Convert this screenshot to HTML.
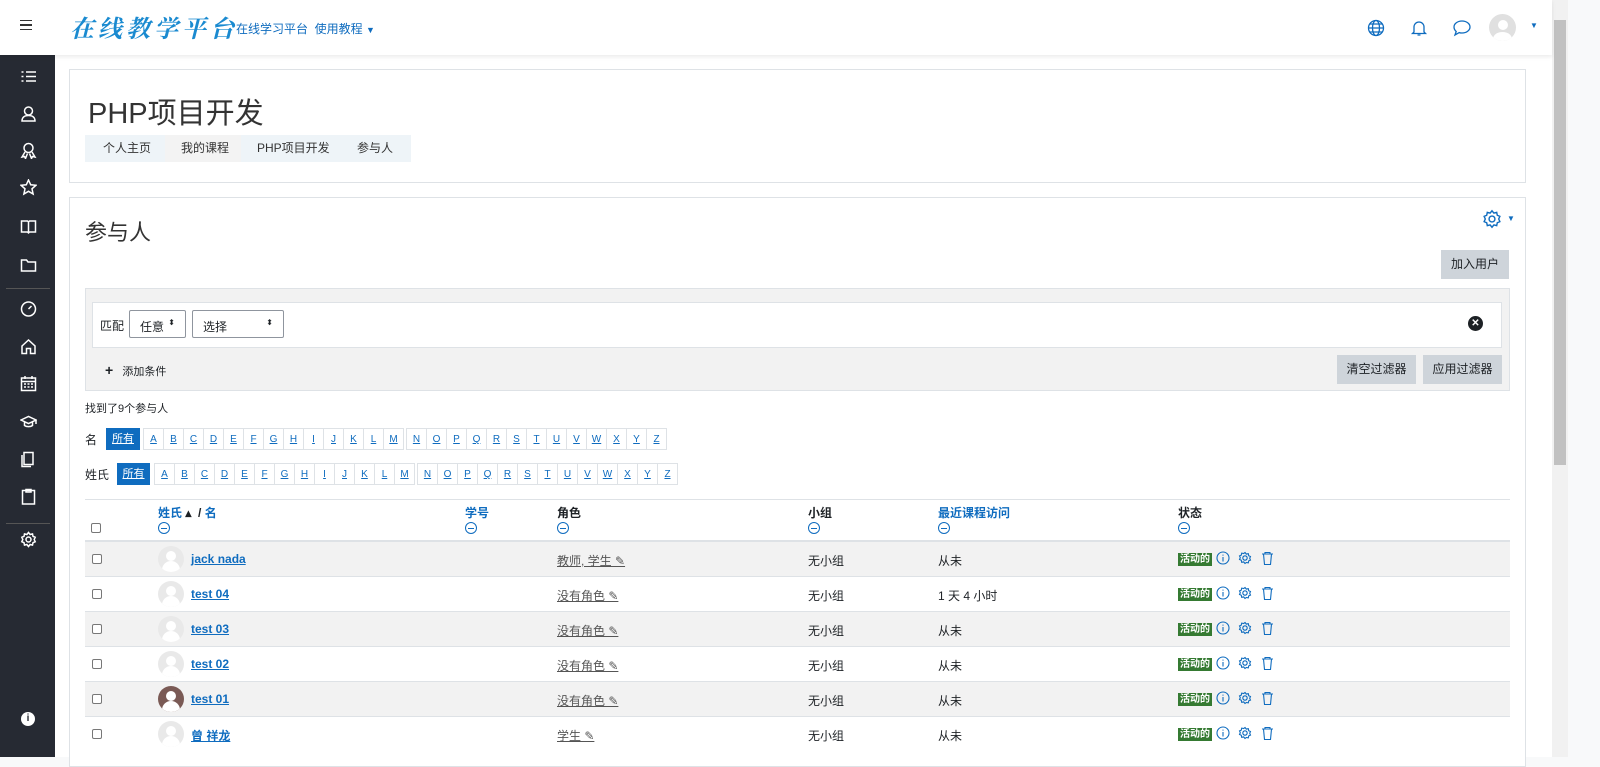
<!DOCTYPE html><html><head><meta charset="utf-8"><style>
*{box-sizing:border-box;margin:0;padding:0}
body{width:1600px;height:757px;overflow:hidden;font-family:"Liberation Sans","Noto Sans CJK SC",sans-serif;font-size:12px;color:#1d2125;background:#f8f9fa;position:relative}
.hdr{position:absolute;left:0;top:0;width:1552px;height:55px;background:#fff;box-shadow:0 2px 4px rgba(0,0,0,.08);z-index:2}
.side{position:absolute;left:0;top:55px;width:55px;height:702px;background:#262a33}
.side svg{position:absolute;left:20px;width:17px;height:17px;fill:none;stroke:#fff;stroke-width:1.5}
.main{position:absolute;left:55px;top:55px;width:1497px;height:702px;background:#fff}
.card{position:absolute;background:#fff;border:1px solid #dee2e6}
a{color:#0f6cbf}
.bc{position:absolute;top:135px;height:27px;line-height:27px;font-size:12px;background:#eef4f8;color:#333}
.btn{position:absolute;background:#ced4da;color:#1d2125;text-align:center;font-size:12px}
.letters{position:absolute;display:flex;font-size:10px}
.letters span{display:inline-block;width:21px;height:22px;line-height:22px;text-align:center;border:1px solid #dee2e6;margin-left:-1px;color:#0f6cbf;text-decoration:underline}
.letters span.gap{margin-left:2px}
.all{position:absolute;background:#0f6cbf;color:#fff;text-decoration:underline;text-align:center;line-height:22px;height:22px;font-size:11px}
.row{position:absolute;left:85px;width:1425px;height:35px;border-top:1px solid #dee2e6;font-size:12px}
.row.s{background:#f2f2f2}
.row>*{position:absolute;top:10px}
.cb{left:7px!important;top:12px!important;width:10px;height:10px;border:1px solid #777;border-radius:2px;background:#fff}
.av{left:73px!important;top:4px!important;width:26px;height:26px;border-radius:50%;background:#e9e9e9;overflow:hidden}
.av:after{content:"";position:absolute;left:8px;top:5px;width:10px;height:10px;border-radius:50%;background:#fff;box-shadow:0 14px 0 4px #fff}
.nm{left:106px;font-weight:bold;color:#0f6cbf;text-decoration:underline;font-size:12px}
.role{left:472px;color:#555;text-decoration:underline}
.badge{left:1093px!important;top:11px!important;background:#357a32;color:#fff;font-size:10px;font-weight:bold;padding:0 2px;height:13px;line-height:13px}
.ic{left:1131px;top:9px!important}
.minus{display:inline-block;width:12px;height:12px;border:1px solid #0f6cbf;border-radius:50%;position:absolute;top:522px}
.minus:after{content:"";position:absolute;left:2px;top:5px;width:6px;height:1px;background:#0f6cbf}
</style></head><body>
<svg width="0" height="0" style="position:absolute"><defs>
<g id="acts" fill="none" stroke="#0f6cbf" stroke-width="1.1"><circle cx="7" cy="7" r="6"/><path d="M7 6v4.5M7 3.6v1"/><g transform="translate(29,7)"><circle r="2.2"/><path d="M0-5.5l1.3 1.6 2-.4.4 2 1.8.8-.8 1.8.8 1.8-1.8.8-.4 2-2-.4L0 5.5l-1.3-1.6-2 .4-.4-2-1.8-.8.8-1.8-.8-1.8 1.8-.8.4-2 2 .4z"/></g><path d="M46 3h11M49 3V1.5h5V3M47.5 3l1 10.5h6l1-10.5"/></g>
</defs></svg>
<div class="hdr">
<div style="position:absolute;left:20px;top:20px;width:12px;height:10px;border-top:1.5px solid #333;border-bottom:1.5px solid #333"><div style="margin-top:3px;height:1.5px;background:#333"></div></div>
<div style="position:absolute;left:70px;top:9px;font-size:24px;color:#1a8ad0;font-style:italic;font-weight:bold;letter-spacing:4px;font-family:'Noto Serif CJK SC',serif">在线教学平台</div>
<div style="position:absolute;left:236px;top:20px;font-size:12px;color:#0f6cbf">在线学习平台 &nbsp;使用教程 <span style="font-size:9px">▼</span></div>
<svg style="position:absolute;left:1367px;top:19px" width="18" height="18" fill="none" stroke="#0f6cbf" stroke-width="1.3"><circle cx="9" cy="9" r="7.5"/><ellipse cx="9" cy="9" rx="3.5" ry="7.5"/><path d="M1.5 9h15M3 5h12M3 13h12"/></svg>
<svg style="position:absolute;left:1410px;top:19px" width="18" height="18" fill="none" stroke="#0f6cbf" stroke-width="1.3"><path d="M4 13V8a5 5 0 0 1 10 0v5l1.5 1.5h-13zM7.5 16h3"/></svg>
<svg style="position:absolute;left:1452px;top:19px" width="20" height="18" fill="none" stroke="#0f6cbf" stroke-width="1.3"><path d="M10 2c4.5 0 8 2.7 8 6s-3.5 6-8 6c-1 0-2-.1-2.8-.4L3 16l1.2-3.5C2.8 11.3 2 9.7 2 8c0-3.3 3.5-6 8-6z"/></svg>
<div style="position:absolute;left:1489px;top:14px;width:27px;height:27px;border-radius:50%;background:#e0e0e0;overflow:hidden"><div style="position:absolute;left:9px;top:6px;width:10px;height:10px;border-radius:50%;background:#fff"></div><div style="position:absolute;left:4px;top:18px;width:19px;height:14px;border-radius:50%;background:#fff"></div></div>
<div style="position:absolute;left:1530px;top:21px;font-size:8px;color:#0f6cbf">▼</div>
</div>
<div class="side">
<svg style="top:13px" viewBox="0 0 17 17"><path d="M6 4h10M6 8.5h10M6 13h10M1.5 4h2M1.5 8.5h2M1.5 13h2"/></svg>
<svg style="top:50px" viewBox="0 0 17 17"><circle cx="8.5" cy="6" r="4"/><path d="M2 16c0-4 3-5.5 6.5-5.5S15 12 15 16z"/></svg>
<svg style="top:87px" viewBox="0 0 17 17"><circle cx="8.5" cy="6" r="4.5"/><path d="M5 10l-3 5 2.5-.5 1 2 2-5M12 10l3 5-2.5-.5-1 2-2-5"/></svg>
<svg style="top:124px" viewBox="0 0 17 17"><path d="M8.5 1l2.2 4.8 5.2.5-3.9 3.5 1.1 5.2-4.6-2.7-4.6 2.7 1.1-5.2L1.1 6.3l5.2-.5z"/></svg>
<svg style="top:163px" viewBox="0 0 17 17"><path d="M1.5 3h6l1 1 1-1h6v11h-6l-1 1-1-1h-6zM8.5 4v10"/></svg>
<svg style="top:202px" viewBox="0 0 17 17"><path d="M1.5 3h5l1.5 2h7.5v9h-14z"/></svg>
<div style="position:absolute;left:6px;top:233px;width:44px;border-top:1px solid #555"></div>
<svg style="top:245px" viewBox="0 0 17 17"><circle cx="8.5" cy="9" r="7"/><path d="M8.5 9l3-3"/></svg>
<svg style="top:283px" viewBox="0 0 17 17"><path d="M2 8l6.5-6 6.5 6v7.5h-4.5v-5h-4v5H2z"/></svg>
<svg style="top:320px" viewBox="0 0 17 17"><rect x="1.5" y="3" width="14" height="12.5"/><path d="M1.5 6.5h14M5 1v3M12 1v3M4 9h2M7.5 9h2M11 9h2M4 12h2M7.5 12h2M11 12h2"/></svg>
<svg style="top:358px" viewBox="0 0 17 17"><path d="M1 7l7.5-3.5L16 7l-7.5 3.5zM4.5 8.5v4c2 1.5 6 1.5 8 0v-4M16 7v4"/></svg>
<svg style="top:396px" viewBox="0 0 17 17"><path d="M4 1.5h9v12H4zM2 4v11.5h9"/></svg>
<svg style="top:433px" viewBox="0 0 17 17"><rect x="2.5" y="2.5" width="12" height="13.5"/><path d="M6 1.5h5v2.5H6z"/></svg>
<div style="position:absolute;left:6px;top:468px;width:44px;border-top:1px solid #555"></div>
<svg style="top:476px" viewBox="0 0 17 17"><circle cx="8.5" cy="8.5" r="2.5"/><path d="M8.5 1.5l1.6 2 2.4-.6.5 2.4 2.2 1-1 2.2 1 2.2-2.2 1-.5 2.4-2.4-.6-1.6 2-1.6-2-2.4.6-.5-2.4-2.2-1 1-2.2-1-2.2 2.2-1 .5-2.4 2.4.6z"/></svg>
<div style="position:absolute;left:21px;top:657px;width:14px;height:14px;border-radius:50%;background:#fff;color:#262a33;font-size:10px;text-align:center;line-height:14px;font-weight:bold">i</div>
</div>
<div class="main"></div>
<div style="position:absolute;left:1552px;top:0;width:16px;height:757px;background:#f1f1f1"><div style="position:absolute;left:2px;top:20px;width:12px;height:445px;background:#c1c1c1"></div></div>
<div class="card" style="left:69px;top:69px;width:1457px;height:114px">
<div style="position:absolute;left:18px;top:20px;font-size:29px;color:#333">PHP项目开发</div>
</div>
<div class="bc" style="left:85px;width:80px;padding-left:18px">个人主页</div>
<div class="bc" style="left:165px;width:76px;padding-left:16px;background:#f3f3f3">我的课程</div>
<div class="bc" style="left:241px;width:100px;padding-left:16px">PHP项目开发</div>
<div class="bc" style="left:341px;width:70px;padding-left:16px">参与人</div>
<div class="card" style="left:69px;top:197px;width:1457px;height:570px"></div>
<div style="position:absolute;left:85px;top:215px;font-size:22px;color:#333">参与人</div>
<svg style="position:absolute;left:1482px;top:209px" width="20" height="20" viewBox="0 0 17 17" fill="none" stroke="#0f6cbf" stroke-width="1.2"><circle cx="8.5" cy="8.5" r="2.5"/><path d="M8.5 1.5l1.6 2 2.4-.6.5 2.4 2.2 1-1 2.2 1 2.2-2.2 1-.5 2.4-2.4-.6-1.6 2-1.6-2-2.4.6-.5-2.4-2.2-1 1-2.2-1-2.2 2.2-1 .5-2.4 2.4.6z"/></svg>
<div style="position:absolute;left:1507px;top:214px;font-size:8px;color:#0f6cbf">▼</div>
<div class="btn" style="left:1441px;top:250px;width:68px;height:29px;line-height:29px">加入用户</div>
<div style="position:absolute;left:85px;top:288px;width:1425px;height:103px;background:#f2f2f2;border:1px solid #dee2e6"></div>
<div style="position:absolute;left:92px;top:302px;width:1410px;height:46px;background:#fff;border:1px solid #dee2e6"></div>
<div style="position:absolute;left:100px;top:317px">匹配</div>
<div style="position:absolute;left:129px;top:310px;width:57px;height:28px;border:1px solid #8f959e;border-radius:2px;padding:7px 10px">任意 <span style="font-size:8px;float:right">⬍</span></div>
<div style="position:absolute;left:192px;top:310px;width:92px;height:28px;border:1px solid #8f959e;border-radius:2px;padding:7px 10px">选择 <span style="font-size:8px;float:right">⬍</span></div>
<div style="position:absolute;left:1468px;top:316px;width:15px;height:15px;border-radius:50%;background:#1d2125;color:#fff;font-size:10px;text-align:center;line-height:15px;font-weight:bold">✕</div>
<div style="position:absolute;left:105px;top:362px;font-size:11px"><b style="font-size:14px">+</b> &nbsp; 添加条件</div>
<div class="btn" style="left:1337px;top:355px;width:79px;height:29px;line-height:29px">清空过滤器</div>
<div class="btn" style="left:1423px;top:355px;width:79px;height:29px;line-height:29px">应用过滤器</div>
<div style="position:absolute;left:85px;top:400px;font-size:11px">找到了9个参与人</div>
<div style="position:absolute;left:85px;top:431px">名</div>
<div class="all" style="left:106px;top:428px;width:34px">所有</div>
<div class="letters" style="left:144px;top:428px"><span>A</span><span>B</span><span>C</span><span>D</span><span>E</span><span>F</span><span>G</span><span>H</span><span>I</span><span>J</span><span>K</span><span>L</span><span>M</span><span class="gap">N</span><span>O</span><span>P</span><span>Q</span><span>R</span><span>S</span><span>T</span><span>U</span><span>V</span><span>W</span><span>X</span><span>Y</span><span>Z</span></div>
<div style="position:absolute;left:85px;top:466px">姓氏</div>
<div class="all" style="left:117px;top:463px;width:33px">所有</div>
<div class="letters" style="left:155px;top:463px"><span>A</span><span>B</span><span>C</span><span>D</span><span>E</span><span>F</span><span>G</span><span>H</span><span>I</span><span>J</span><span>K</span><span>L</span><span>M</span><span class="gap">N</span><span>O</span><span>P</span><span>Q</span><span>R</span><span>S</span><span>T</span><span>U</span><span>V</span><span>W</span><span>X</span><span>Y</span><span>Z</span></div>
<div style="position:absolute;left:85px;top:499px;width:1425px;border-top:1px solid #dee2e6"></div>
<div style="position:absolute;left:91px;top:523px;width:10px;height:10px;border:1px solid #777;border-radius:2px"></div>
<div style="position:absolute;left:158px;top:504px;font-weight:bold"><a>姓氏</a> ▴ &nbsp;/ <a>名</a></div>
<div style="position:absolute;left:465px;top:504px;font-weight:bold"><a>学号</a></div>
<div style="position:absolute;left:557px;top:504px;font-weight:bold">角色</div>
<div style="position:absolute;left:808px;top:504px;font-weight:bold">小组</div>
<div style="position:absolute;left:938px;top:504px;font-weight:bold"><a>最近课程访问</a></div>
<div style="position:absolute;left:1178px;top:504px;font-weight:bold">状态</div>
<span class="minus" style="left:158px"></span><span class="minus" style="left:465px"></span><span class="minus" style="left:557px"></span><span class="minus" style="left:808px"></span><span class="minus" style="left:938px"></span><span class="minus" style="left:1178px"></span>
<div style="position:absolute;left:85px;top:540px;width:1425px;border-top:2px solid #dee2e6"></div>

<div class="row s" style="top:541px"><span class="cb"></span><span class="av"></span><span class="nm">jack nada</span><span class="role">教师, 学生 ✎</span><span style="left:723px">无小组</span><span style="left:853px">从未</span><span class="badge">活动的</span><svg class="ic" width="60" height="16"><use href="#acts"/></svg></div>
<div class="row" style="top:576px"><span class="cb"></span><span class="av"></span><span class="nm">test 04</span><span class="role">没有角色 ✎</span><span style="left:723px">无小组</span><span style="left:853px">1 天 4 小时</span><span class="badge">活动的</span><svg class="ic" width="60" height="16"><use href="#acts"/></svg></div>
<div class="row s" style="top:611px"><span class="cb"></span><span class="av"></span><span class="nm">test 03</span><span class="role">没有角色 ✎</span><span style="left:723px">无小组</span><span style="left:853px">从未</span><span class="badge">活动的</span><svg class="ic" width="60" height="16"><use href="#acts"/></svg></div>
<div class="row" style="top:646px"><span class="cb"></span><span class="av"></span><span class="nm">test 02</span><span class="role">没有角色 ✎</span><span style="left:723px">无小组</span><span style="left:853px">从未</span><span class="badge">活动的</span><svg class="ic" width="60" height="16"><use href="#acts"/></svg></div>
<div class="row s" style="top:681px"><span class="cb"></span><span class="av" style="background:#7a5a55"></span><span class="nm">test 01</span><span class="role">没有角色 ✎</span><span style="left:723px">无小组</span><span style="left:853px">从未</span><span class="badge">活动的</span><svg class="ic" width="60" height="16"><use href="#acts"/></svg></div>
<div class="row" style="top:716px"><span class="cb"></span><span class="av"></span><span class="nm">曾 祥龙</span><span class="role">学生 ✎</span><span style="left:723px">无小组</span><span style="left:853px">从未</span><span class="badge">活动的</span><svg class="ic" width="60" height="16"><use href="#acts"/></svg></div>
</body></html>
